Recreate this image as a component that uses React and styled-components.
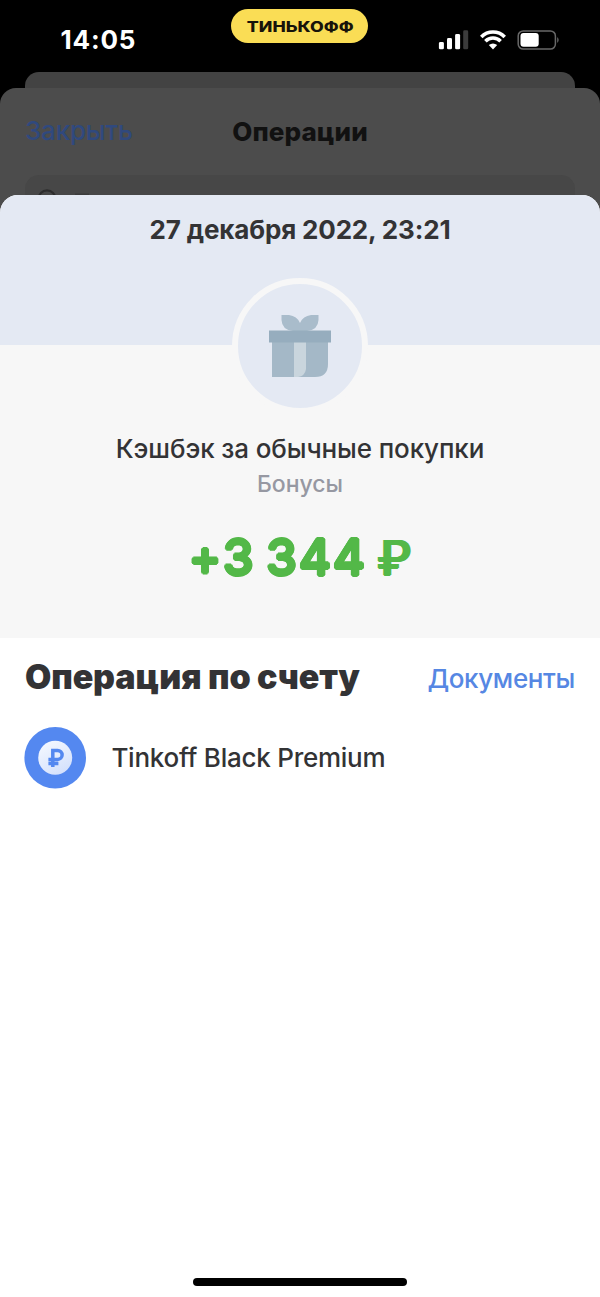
import React from "react";
import styled, { createGlobalStyle } from "styled-components";

const GlobalStyle = createGlobalStyle`
  * { box-sizing: border-box; }
  body {
    margin: 0;
    background: #000;
    font-family: Inter, "Noto Sans", sans-serif;
    color: #333335;
  }
`;

const Screen = styled.main`
  width: 600px;
  height: 1297px;
  display: flex;
  flex-direction: column;
  overflow: hidden;
  background: #000;
`;

const StatusBar = styled.header`
  display: grid;
  grid-template-columns: 231px 137px 1fr;
  height: 72px;
  flex: none;
`;

const Clock = styled.time`
  padding: 24px 0 0 60.5px;
  font-size: 26px;
  line-height: 32px;
  font-weight: 700;
  letter-spacing: 0.8px;
  color: #fff;
`;

const BrandPill = styled.div`
  height: 34px;
  margin-top: 9px;
  border-radius: 17px;
  background: #fadd55;
  display: flex;
  align-items: center;
  justify-content: center;
`;

const BrandName = styled.span`
  font-size: 14px;
  line-height: 34px;
  font-weight: 850;
  color: #17130a;
  white-space: nowrap;
  padding: 1px 0 0 1px;
  transform: scaleX(1.27);
`;

const StatusIcons = styled.div`
  display: flex;
  padding: 30px 0 0 70px;
`;

const BackSheet = styled.div`
  flex: none;
  height: 16px;
  margin: 0 25px;
  border-radius: 14px 14px 0 0;
  background: #434343;
`;

const OperationsSheet = styled.section`
  flex: none;
  height: 123px;
  border-radius: 16px 16px 0 0;
  background: #4c4c4c;
  margin-bottom: -16px;
`;

const OperationsHeader = styled.div`
  display: grid;
  grid-template-columns: 1fr auto 1fr;
  align-items: center;
  height: 87px;
  padding: 0 25px;
`;

const CloseLink = styled.span`
  font-size: 26px;
  line-height: 32px;
  padding-bottom: 1px;
  font-weight: 500;
  letter-spacing: -0.2px;
  color: #30497e;
`;

const OperationsTitle = styled.h2`
  margin: 0;
  font-size: 26px;
  line-height: 32px;
  font-weight: 770;
  letter-spacing: 0.1px;
  color: #111;
`;

const SearchField = styled.div`
  height: 36px;
  margin: 0 25px;
  padding: 13px 0 0 12px;
  border-radius: 14px 14px 0 0;
  background: #474747;
`;

const DetailSheet = styled.section`
  position: relative;
  flex: 1;
  display: flex;
  flex-direction: column;
  align-items: center;
  border-radius: 18px 18px 0 0;
  overflow: hidden;
  background: #fff;
`;

const DateBand = styled.div`
  width: 100%;
  height: 150.4px;
  flex: none;
  padding-top: 18.5px;
  background: #e4e9f3;
  text-align: center;
`;

const DateText = styled.h1`
  margin: 0;
  font-size: 26px;
  line-height: 32px;
  font-weight: 650;
  letter-spacing: -0.15px;
`;

const Summary = styled.div`
  width: 100%;
  height: 292.6px;
  flex: none;
  display: flex;
  flex-direction: column;
  align-items: center;
  background: #f7f7f7;
`;

const GiftBadge = styled.div`
  flex: none;
  width: 136px;
  height: 136px;
  margin-top: -67.6px;
  border: 6.5px solid #f7f7f7;
  border-radius: 50%;
  background: #e4e9f3;
  display: flex;
  align-items: center;
  justify-content: center;
`;

const Merchant = styled.div`
  margin-top: 19.2px;
  font-size: 26px;
  line-height: 32px;
  font-weight: 550;
  letter-spacing: -0.11px;
  white-space: nowrap;
`;

const Category = styled.div`
  margin-top: 5px;
  font-size: 23px;
  line-height: 28px;
  font-weight: 500;
  color: #9698a2;
`;

const Amount = styled.div`
  margin-top: 30px;
  display: flex;
  font-size: 49px;
  line-height: 60px;
  font-weight: 500;
  letter-spacing: 1.9px;
  word-spacing: -4.2px;
  white-space: pre;
  color: #53b848;
  text-shadow: 1.6px 0 #53b848, -1.6px 0 #53b848, 0 1.6px #53b848, 0 -1.6px #53b848,
    1.1px 1.1px #53b848, -1.1px 1.1px #53b848, 1.1px -1.1px #53b848, -1.1px -1.1px #53b848;
`;

const Currency = styled.span`
  font-size: 48px;
  font-weight: 400;
  letter-spacing: 0;
  text-shadow: 1.7px 0 #53b848, -1.7px 0 #53b848, 0.9px 0.5px #53b848, -0.9px 0.5px #53b848,
    0.9px -0.5px #53b848, -0.9px -0.5px #53b848;
`;

const SectionHeader = styled.div`
  width: 100%;
  height: 80px;
  padding: 0 25px;
  display: flex;
  justify-content: space-between;
  align-items: center;
`;

const SectionTitle = styled.h2`
  margin: -2px 0 0;
  font-size: 34px;
  line-height: 42px;
  font-weight: 860;
  letter-spacing: -0.15px;
  white-space: nowrap;
`;

const DocumentsLink = styled.span`
  font-size: 26px;
  line-height: 32px;
  margin-top: 3px;
  font-weight: 540;
  letter-spacing: -0.35px;
  color: #5687e3;
`;

const AccountRow = styled.div`
  width: 100%;
  padding: 9px 24.4px;
  display: flex;
  align-items: center;
  gap: 25px;
`;

const AccountName = styled.span`
  font-size: 26px;
  line-height: 32px;
  padding-top: 1px;
  font-weight: 530;
  letter-spacing: -0.25px;
  white-space: nowrap;
`;

const HomeIndicator = styled.div`
  width: 214px;
  height: 8px;
  margin-top: auto;
  margin-bottom: 11px;
  border-radius: 4px;
  background: #000;
`;

const StatusGlyphs = () => (
  <svg width="122" height="20" viewBox="0 0 122 20">
    <g fill="#fff">
      <rect x="0.9" y="12" width="5" height="7.3" rx="1.4" />
      <rect x="9" y="8" width="5" height="11.3" rx="1.4" />
      <rect x="17.1" y="4" width="5" height="15.3" rx="1.4" />
      <rect x="25.2" y="0.3" width="5" height="19" rx="1.4" fill="#3b3b3b" />
    </g>
    <g fill="none" stroke="#fff" strokeWidth="3.6">
      <path d="M43.3 6.9A16.3 16.3 0 0 1 66.7 6.9" />
      <path d="M47.4 11.2A10.8 10.8 0 0 1 62.6 11.2" />
    </g>
    <path fill="#fff" d="M50.8 15.1Q55 11.8 59.2 15.1L55 19.4Z" />
    <rect x="80.2" y="0.9" width="37.2" height="18.2" rx="5" fill="none" stroke="#686868" strokeWidth="1.5" />
    <rect x="82.5" y="3" width="18.2" height="13.8" rx="3" fill="#fff" />
    <path d="M119.2 7q3 3 0 6z" fill="#686868" />
  </svg>
);

const SearchIcon = () => (
  <svg width="70" height="24" viewBox="0 0 70 24">
    <circle cx="10" cy="11" r="8.6" fill="none" stroke="#2d2d2d" strokeWidth="2.2" />
    <path d="M38 6.4h14" stroke="#3c3c3c" strokeWidth="1.6" />
  </svg>
);

const GiftIcon = () => (
  <svg width="62" height="62" viewBox="0 0 62 62">
    <path fill="#a9bccb" d="M12.5 0H20Q28 1 31 8Q34 1 42 0H49.5V5Q49 15 38 16H24Q13 15 12.5 5Z" />
    <path fill="#a4b8c7" d="M3 27H59V49Q59 62 46 62H3Z" />
    <path fill="#c9d5dd" d="M25 27H37V54Q36 61 29 62H25Z" />
    <path fill="#96adbe" d="M0 15.5H62V27.5H0Z" />
  </svg>
);

const RubleIcon = () => (
  <svg width="62" height="62" viewBox="0 0 62 62">
    <defs>
      <linearGradient id="coin" x1="0.2" y1="0" x2="0.8" y2="1">
        <stop offset="0" stopColor="#f4f8ff" />
        <stop offset="1" stopColor="#d2dffc" />
      </linearGradient>
    </defs>
    <circle cx="31.2" cy="30.8" r="30.8" fill="#5488f0" />
    <circle cx="31.2" cy="30.8" r="17" fill="url(#coin)" />
    <path
      d="M28.8 40V23.4H33.6a4.4 4.4 0 0 1 0 9H24.4M24.4 36.4h10"
      fill="none"
      stroke="#5488f0"
      strokeWidth="3.5"
    />
  </svg>
);

export default function App() {
  return (
    <>
      <GlobalStyle />
      <Screen>
        <StatusBar>
          <Clock>14:05</Clock>
          <BrandPill>
            <BrandName>ТИНЬКОФФ</BrandName>
          </BrandPill>
          <StatusIcons>
            <StatusGlyphs />
          </StatusIcons>
        </StatusBar>
        <BackSheet />
        <OperationsSheet>
          <OperationsHeader>
            <CloseLink>Закрыть</CloseLink>
            <OperationsTitle>Операции</OperationsTitle>
          </OperationsHeader>
          <SearchField>
            <SearchIcon />
          </SearchField>
        </OperationsSheet>
        <DetailSheet>
          <DateBand>
            <DateText>27 декабря 2022, 23:21</DateText>
          </DateBand>
          <Summary>
            <GiftBadge>
              <GiftIcon />
            </GiftBadge>
            <Merchant>Кэшбэк за обычные покупки</Merchant>
            <Category>Бонусы</Category>
            <Amount>
              <span>+3 344 </span>
              <Currency>₽</Currency>
            </Amount>
          </Summary>
          <SectionHeader>
            <SectionTitle>Операция по счету</SectionTitle>
            <DocumentsLink>Документы</DocumentsLink>
          </SectionHeader>
          <AccountRow>
            <RubleIcon />
            <AccountName>Tinkoff Black Premium</AccountName>
          </AccountRow>
          <HomeIndicator />
        </DetailSheet>
      </Screen>
    </>
  );
}
